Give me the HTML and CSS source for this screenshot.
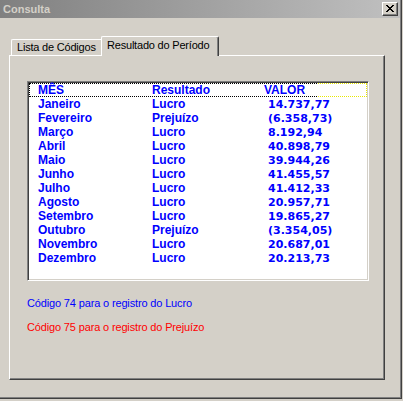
FILE: index.html
```html
<!DOCTYPE html>
<html lang="pt">
<head>
<meta charset="utf-8">
<title>Consulta</title>
<link rel="stylesheet" href="styles.css">
</head>
<body>
<div class="window">
  <div class="titlebar">
    <span class="title">Consulta</span>
    <span class="close">
      <svg width="8" height="7" viewBox="0 0 8 7"><path d="M0 0h2v1H0z M6 0h2v1H6z M1 1h2v1H1z M5 1h2v1H5z M2 2h4v1H2z M3 3h2v1H3z M2 4h4v1H2z M1 5h2v1H1z M5 5h2v1H5z M0 6h2v1H0z M6 6h2v1H6z" fill="#000"/></svg>
    </span>
  </div>
  <div class="client">
    <div class="tabs">
      <div class="tab">Lista de Códigos</div>
      <div class="tab active">Resultado do Período</div>
    </div>
    <div class="panel">
      <div class="listbox">
        <div class="row header"><span>MÊS</span><span>Resultado</span><span>VALOR</span></div>
        <div class="rows">
          <div class="row"><span>Janeiro</span><span>Lucro</span><span class="num">14.737,77</span></div>
          <div class="row"><span>Fevereiro</span><span>Prejuízo</span><span class="num">(6.358,73)</span></div>
          <div class="row"><span>Março</span><span>Lucro</span><span class="num">8.192,94</span></div>
          <div class="row"><span>Abril</span><span>Lucro</span><span class="num">40.898,79</span></div>
          <div class="row"><span>Maio</span><span>Lucro</span><span class="num">39.944,26</span></div>
          <div class="row"><span>Junho</span><span>Lucro</span><span class="num">41.455,57</span></div>
          <div class="row"><span>Julho</span><span>Lucro</span><span class="num">41.412,33</span></div>
          <div class="row"><span>Agosto</span><span>Lucro</span><span class="num">20.957,71</span></div>
          <div class="row"><span>Setembro</span><span>Lucro</span><span class="num">19.865,27</span></div>
          <div class="row"><span>Outubro</span><span>Prejuízo</span><span class="num">(3.354,05)</span></div>
          <div class="row"><span>Novembro</span><span>Lucro</span><span class="num">20.687,01</span></div>
          <div class="row"><span>Dezembro</span><span>Lucro</span><span class="num">20.213,73</span></div>
        </div>
      </div>
      <p class="note blue">Código 74 para o registro do Lucro</p>
      <p class="note red">Código 75 para o registro do Prejuízo</p>
    </div>
  </div>
</div>
</body>
</html>
```
FILE: styles.css
```css
html, body {
  margin: 0;
  padding: 0;
}
body {
  width: 403px;
  height: 401px;
  overflow: hidden;
  background: #D4D0C8;
  font-family: "Liberation Sans", Arial, sans-serif;
}
.window {
  box-sizing: border-box;
  width: 402px;
  height: 399px;
  border-right: 1px solid #404040;
  border-bottom: 1px solid #404040;
  box-shadow: inset -1px -1px 0 #808080;
  display: flex;
  flex-direction: column;
}
.titlebar {
  height: 18px;
  flex: none;
  margin-right: 1px;
  background: linear-gradient(to right, #808080, #C0C0C0);
  display: flex;
  align-items: center;
  justify-content: space-between;
  padding: 0 2px 0 3px;
}
.title {
  font-weight: bold;
  font-size: 11px;
  line-height: 13px;
  color: #D4D0C8;
}
.close {
  box-sizing: border-box;
  width: 16px;
  height: 14px;
  background: #D4D0C8;
  border-top: 1px solid #FFFFFF;
  border-left: 1px solid #FFFFFF;
  border-right: 1px solid #404040;
  border-bottom: 1px solid #404040;
  box-shadow: inset -1px -1px 0 #808080;
  display: flex;
  justify-content: center;
  align-items: center;
  padding-bottom: 1px;
}
.close svg {
  display: block;
}
.client {
  padding: 18px 0 0 9px;
}
.tabs {
  display: flex;
  align-items: flex-end;
  padding-left: 2px;
  font-size: 11px;
  line-height: 13px;
  letter-spacing: -0.2px;
  color: #000;
}
.tab {
  box-sizing: border-box;
  width: 90px;
  height: 16px;
  border-top: 1px solid #FFFFFF;
  border-left: 1px solid #FFFFFF;
  border-radius: 2px 0 0 0;
  padding: 1px 0 0 5px;
  white-space: nowrap;
  background: #D4D0C8;
}
.tab.active {
  width: 118px;
  height: 20px;
  margin-bottom: -1px;
  padding-top: 2px;
  border-right: 1px solid #404040;
  border-radius: 2px 2px 0 0;
  box-shadow: inset -1px 0 0 #808080;
  position: relative;
  z-index: 1;
}
.panel {
  box-sizing: border-box;
  width: 376px;
  height: 325px;
  border-top: 1px solid #FFFFFF;
  border-left: 1px solid #FFFFFF;
  border-right: 1px solid #404040;
  border-bottom: 1px solid #404040;
  box-shadow: inset -1px -1px 0 #808080;
  padding: 25px 0 0 17px;
}
.listbox {
  box-sizing: border-box;
  width: 342px;
  height: 200px;
  background: #FFFFFF;
  border: 1px solid;
  border-color: #808080 #FFFFFF #FFFFFF #808080;
  box-shadow: inset 1px 1px 0 #404040, inset -1px -1px 0 #D4D0C8;
  padding: 1px;
  color: #0000FF;
  font-weight: bold;
  font-size: 12px;
}
.row {
  display: grid;
  grid-template-columns: 114px 112px 1fr;
  align-items: baseline;
  height: 14px;
  line-height: 14px;
  white-space: nowrap;
}
.row.header {
  box-sizing: border-box;
  position: relative;
  line-height: 12px;
  border: 1px dotted #000;
  padding-left: 8px;
}
.row.header::after {
  content: "";
  position: absolute;
  top: -1px;
  bottom: -1px;
  right: -1px;
  width: 48px;
  border: 1px dotted #E8E800;
  border-left: none;
  background: #FFFFFF;
}
.rows {
  padding-left: 9px;
}
.num {
  font-family: "DejaVu Sans", sans-serif;
  font-size: 11px;
  padding-left: 4px;
}
.note {
  margin: 16px 0 0 0;
  font-size: 11px;
  line-height: 13px;
  letter-spacing: -0.15px;
}
.note.red {
  margin-top: 11px;
  color: #FF0000;
}
.note.blue {
  color: #0000FF;
}
```
